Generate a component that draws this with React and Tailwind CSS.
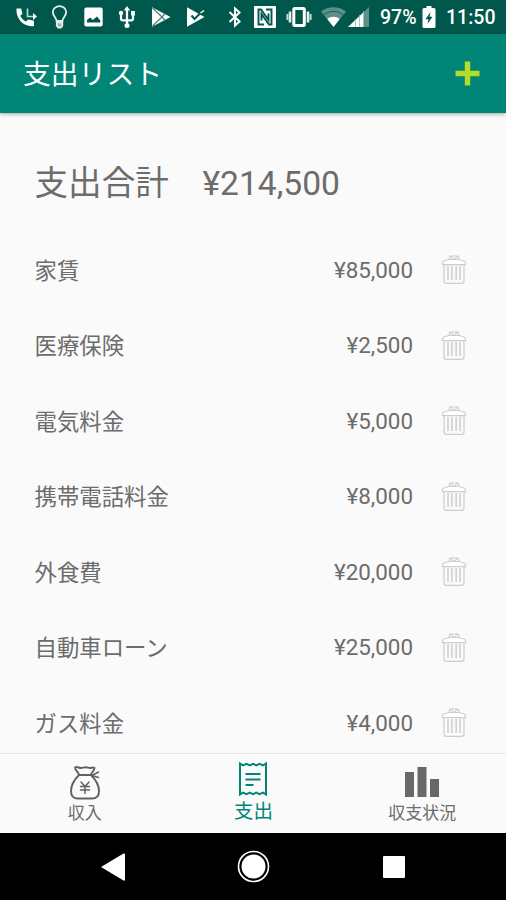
import { useState } from 'react';

const expenses = [
  { name: '家賃', amount: 85000 },
  { name: '医療保険', amount: 2500 },
  { name: '電気料金', amount: 5000 },
  { name: '携帯電話料金', amount: 8000 },
  { name: '外食費', amount: 20000 },
  { name: '自動車ローン', amount: 25000 },
  { name: 'ガス料金', amount: 4000 },
];

const TOTAL = 214500;

const yen = (value) => `¥${value.toLocaleString('en-US')}`;

const StatusBar = () => (
  <div className="flex h-[34px] shrink-0 items-center bg-[#00574b] pl-[15px] text-white">
    {/* Missed / forwarded call */}
    <svg className="w-[23px] h-[22px]" viewBox="0 0 23 22" fill="none">
      <path d="M1.500 2.500h4.600l1.400 5.300-2.300 2c1.500 2.700 3.200 4.400 5.700 5.800l2.300-2.200 5.800 1.400V20C9 21.500.5 13 1.500 2.500z" fill="#fff" />
      <path d="M12.500 2.500v8H20" stroke="#c2d7d4" strokeWidth="1.600" />
      <path d="M18 7l4 3.500-4 3.500z" fill="#fff" />
    </svg>
    <svg className="ml-[13px] w-[17px] h-[24px]" viewBox="0 0 17 24" fill="none" stroke="#e4eeec" strokeWidth="1.800">
      <path d="M5.600 16c0-3-3.800-4.800-3.800-8.900a6.700 6 0 0 1 13.400 0c0 4.100-3.800 5.900-3.800 8.900z" />
      <path d="M5.800 17.500h5.500v3.300l-1.400 1.700H7.200l-1.400-1.700z" fill="#8fb5af" />
    </svg>
    <svg className="ml-[16px] w-[19px] h-[20px]" viewBox="0 0 19 20">
      <path fillRule="evenodd" fill="#fff" d="M2.300.5h14.400a2 2 0 0 1 2 2v15a2 2 0 0 1-2 2H2.300a2 2 0 0 1-2-2v-15a2 2 0 0 1 2-2zM3 15.500h13.300v-2l-3.300-4-4.300 3.500-2.500-2.500L3 13z" />
    </svg>
    <svg className="ml-[15px] w-[18px] h-[24px]" viewBox="0 0 18 24" fill="none" stroke="#fff" strokeWidth="2.200">
      <path d="M9 4v16M3 8v5.500c0 1.200.6 1.800 1.700 1.800h8.600c1.100 0 1.700-.6 1.700-1.800V9" />
      <path d="M9 1l3.200 4.500H5.800zM13 6h4v4.500h-4z" fill="#fff" stroke="none" />
      <circle cx="3" cy="8" r="2.200" fill="#fff" stroke="none" />
      <circle cx="9" cy="20.500" r="2.500" fill="#fff" stroke="none" />
    </svg>
    {/* Play Store and Play Protect */}
    <svg className="ml-[15px] w-[20px] h-[22px]" viewBox="0 0 20 22">
      <path d="M1 1.200L19.500 11 1 20.800z" fill="#fff" />
      <path d="M1.500 2l9.500 9-9.500 9M14 7.500l-3 3.500 3 3.500" fill="none" stroke="#3d7e75" strokeWidth="1.200" />
    </svg>
    <svg className="ml-[15px] w-[20px] h-[22px]" viewBox="0 0 20 22">
      <path d="M1 1.200L18.500 11 1 20.800z" fill="#fff" />
      <path d="M5.500 9.500l3 3.500L15 6.500" fill="none" stroke="#00574b" strokeWidth="2" />
      <path d="M14.500 7L18 4.500" stroke="#fff" strokeWidth="1.500" />
    </svg>
    <svg className="ml-[22px] w-[14px] h-[22px]" viewBox="0 0 14 22" fill="none" stroke="#fff" strokeWidth="2">
      <path d="M1.500 6l10 9.500L7 19.500v-17l4.500 4-10 9.500" />
    </svg>
    {/* NFC: two interlocking brackets */}
    <svg className="ml-[12px] w-[22px] h-[22px]" viewBox="0 0 22 22" fill="none">
      <rect width="22" height="22" rx="1" fill="#fff" />
      <path d="M10 18.500H4.500v-15H7L14.500 14V7.500" stroke="#00574b" strokeWidth="1.900" />
      <path d="M12 3.500h5.500v15H15L7.500 8v6.500" stroke="#00574b" strokeWidth="1.900" />
    </svg>
    <svg className="ml-[10px] w-[26px] h-[22px]" viewBox="0 0 26 22" fill="none">
      <rect x="7.800" y="2.500" width="10.500" height="17" rx="1" stroke="#fff" strokeWidth="3" />
      <path d="M4 5.500v11M22 5.500v11" stroke="#e4eeec" strokeWidth="2.600" />
      <path d="M1.400 8v6M24.600 8v6" stroke="#c2d7d4" strokeWidth="2" />
    </svg>
    <svg className="ml-[9px] w-[25px] h-[20px]" viewBox="0 0 25 20">
      <path d="M0 4.500C7-1.200 18-1.200 25 4.500L12.500 20z" fill="#5b9189" />
      <path d="M3 7.600c6-4.200 13-4.200 19 0" fill="none" stroke="#00574b" strokeWidth=".8" />
      <path d="M6.300 12c3.500-3 8.900-3 12.400 0l-6.200 8z" fill="#fff" />
    </svg>
    <svg className="ml-[2px] w-[21px] h-[20px]" viewBox="0 0 21 20">
      <path d="M0 20L21 0v20z" fill="#5b9189" />
      <path d="M0 20L15.500 5.200V20z" fill="#fff" />
      <path d="M7.500 12v8M11.500 8v12M15.500 4v16" stroke="#9bbdb8" strokeWidth=".8" />
    </svg>
    <span className="ml-[11px] w-[38px] whitespace-nowrap pt-[2px] text-[19.500px] leading-none font-medium">97%</span>
    <svg className="ml-[4px] w-[14px] h-[22px]" viewBox="0 0 14 22">
      <path d="M4.500 0h5v2H12a1.500 1.500 0 0 1 1.500 1.500v17A1.500 1.500 0 0 1 12 22H2a1.500 1.500 0 0 1-1.500-1.500v-17A1.500 1.500 0 0 1 2 2h2.500z" fill="#fff" />
      <path d="M8.500 6l-5 7.200h3L5.500 18l5-7.200h-3z" fill="#00574b" />
    </svg>
    <span className="ml-[10px] whitespace-nowrap pt-[2px] text-[19.500px] leading-none font-medium">11:50</span>
  </div>
);

const TrashIcon = () => (
  <svg className="w-[26px] h-[31px]" viewBox="0 0 26 31" fill="none" stroke="#cdcdcd" strokeWidth="1.200">
    <path d="M3 11v16c0 1.600.8 2.400 2.300 2.400h15.400c1.500 0 2.300-.8 2.300-2.400V11" />
    <path d="M7 12v14M10.800 12v14M15.200 12v14M19 12v14" stroke="#d2d2d2" strokeWidth="1.700" />
    <path d="M8 5.500l1-3.500h8l1 3.500M10 2.500l2 2.500h2l2-2.500" />
    <path d="M1.500 10.700V9c0-1.300 1-2 3-2.500L8 5.500h10l3.500 1c2 .5 3 1.200 3 2.500v1.700z" fill="#fff" />
  </svg>
);

const MoneyBagIcon = () => (
  <svg className="w-[30px] h-[35px]" viewBox="0 0 30 35" fill="none" stroke="#616161" strokeWidth="1.900" strokeLinecap="round" strokeLinejoin="round">
    <path d="M9 10C8.500 7 5 5.500 5 2.500c2-1.500 4 .7 6 .5S14 2 16 2.200s3 1 4.500.8 2.500-1 4 0C24.500 6 21.500 7 21 10z" />
    <path d="M9 10C4.500 14.500 1 20 1 26c0 5 3 7.500 7 7.500h14c4 0 7-2.500 7-7.500 0-6-3.500-11.500-8-16" />
    <path d="M22 10.500L28.500 7M22 10.500l6.500 2" strokeWidth="1.500" />
    <path d="M11 17l4 4.500 4-4.500M15 21.500v7M10.500 21.500h9M10.500 25h9" strokeWidth="1.500" />
  </svg>
);

const ReceiptIcon = () => (
  <svg className="w-[30px] h-[36px]" viewBox="0 0 30 36" fill="none" stroke="#008577" strokeWidth="2">
    <path d="M2 2.500l3 1.800 3.500-1.500 3.300 1.500L15 2.800l3.200 1.500 3.300-1.500 3.500 1.500 3-1.800v31l-3-1.800-3.500 1.500-3.300-1.500-3.200 1.500-3.200-1.500-3.300 1.500L5 31.700l-3 1.800z" />
    <path d="M7.500 13h15M7.500 18.500h15M7.500 24h8" />
  </svg>
);

const ChartIcon = () => (
  <svg className="w-[36px] h-[32px]" viewBox="0 0 36 32" fill="#686868">
    <rect x="1" y="6" width="9" height="25" />
    <rect x="13.500" y="1" width="9" height="30" />
    <rect x="26" y="13" width="9" height="18" />
  </svg>
);

const tabs = [
  { id: 'income', label: '収入', icon: <MoneyBagIcon /> },
  { id: 'expense', label: '支出', icon: <ReceiptIcon /> },
  { id: 'balance', label: '収支状況', icon: <ChartIcon /> },
];

const App = () => {
  const [activeTab, setActiveTab] = useState('expense');

  return (
    <div className="flex h-[900px] w-[506px] flex-col overflow-hidden bg-[#fafafa] font-[Roboto,'Noto_Sans_CJK_JP',sans-serif] text-[#6c6c6c]">
      <StatusBar />

      <header className="z-10 flex h-[79px] shrink-0 items-center justify-between bg-[#008577] pr-[26px] pl-[23px] shadow-[0_1px_4px_rgba(0,0,0,0.35)]">
        <h1 className="pt-[2px] text-[27.800px] leading-none text-white">支出リスト</h1>
        <button aria-label="追加">
          <svg className="w-[25px] h-[25px]" viewBox="0 0 25 25" stroke="#b4dc28" strokeWidth="5.400">
            <path d="M12.500 .5v24M.5 12.500h24" />
          </svg>
        </button>
      </header>

      <main className="min-h-0 flex-1 overflow-hidden pr-[39px] pl-[34.500px]">
        <h2 className="flex h-[119px] items-center pt-[22px] text-[33.600px] leading-none whitespace-pre">支出合計　{yen(TOTAL)}</h2>
        <ul>
          {expenses.map((item) => (
            <li key={item.name} className="flex h-[75.500px] items-center text-[22.400px] leading-none">
              <span className="flex-1 pt-[2px]">{item.name}</span>
              <span>{yen(item.amount)}</span>
              <button className="ml-[28px]" aria-label="削除">
                <TrashIcon />
              </button>
            </li>
          ))}
        </ul>
      </main>

      <nav className="grid h-[80px] shrink-0 grid-cols-3 border-t border-[#e8e8e8]">
        {tabs.map((tab) => (
          <button
            key={tab.id}
            onClick={() => setActiveTab(tab.id)}
            className={`flex flex-col items-center pl-px ${tab.id === activeTab ? 'pt-[7px] text-[19.500px] text-[#008577]' : 'pt-[10px] text-[17px]'}`}
          >
            <span className="flex h-[36px] items-center">{tab.icon}</span>
            <span className="mt-[5px] leading-none">{tab.label}</span>
          </button>
        ))}
      </nav>

      {/* Android navigation buttons */}
      <div className="grid h-[67px] shrink-0 grid-cols-[226px_54px_226px] items-center justify-items-center bg-black">
        <svg className="w-[26px] h-[28px]" viewBox="0 0 26 28" fill="#fff">
          <path d="M1 14L23.500.5q1.500-.5 1.500 1v25q0 1.500-1.500 1z" />
        </svg>
        <svg className="w-[33px] h-[33px]" viewBox="0 0 33 33">
          <circle cx="16.500" cy="16.500" r="15" fill="none" stroke="#fff" strokeWidth="1.600" />
          <circle cx="16.500" cy="16.500" r="12" fill="#fff" />
        </svg>
        <div className="ml-[2px] h-[22px] w-[22px] rounded-[1px] bg-white" />
      </div>
    </div>
  );
};

export default App;
